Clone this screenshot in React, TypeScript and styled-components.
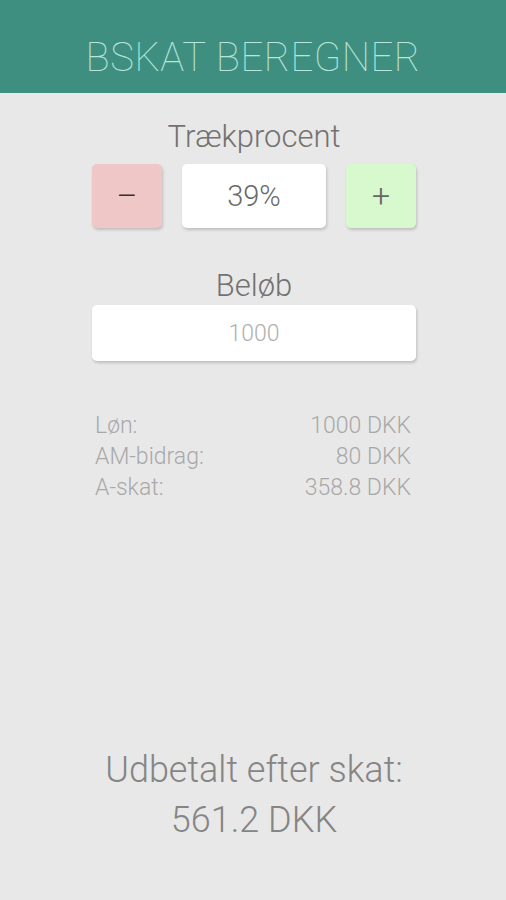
import React from "react";
import styled, { createGlobalStyle } from "styled-components";

const Global = createGlobalStyle`
  html, body {
    margin: 0;
    padding: 0;
    background: #e8e8e8;
    font-family: Roboto, "Liberation Sans", sans-serif;
  }
`;

const Page = styled.div`
  min-height: 900px;
  display: flex;
  flex-direction: column;
  background: #e8e8e8;
`;

const Header = styled.header`
  height: 93px;
  background: #3f8f81;
  display: flex;
  align-items: flex-end;
  justify-content: center;
  padding-bottom: 12px;
  box-sizing: border-box;
`;

const Title = styled.h1`
  margin: 0;
  font-size: 40px;
  font-weight: 100;
  color: #b8e6dc;
  letter-spacing: 0.5px;
`;

const Body = styled.main`
  flex: 1;
  display: flex;
  flex-direction: column;
  align-items: center;
  padding: 0 90px 0 92px;
`;

const Label = styled.div<{ $top: number }>`
  margin-top: ${(p) => p.$top}px;
  font-size: 31px;
  font-weight: 300;
  color: #727272;
  line-height: 34px;
`;

const Stepper = styled.div`
  width: 100%;
  margin-top: 10px;
  display: flex;
  justify-content: space-between;
  align-items: center;
`;

const Card = styled.div`
  background: #fff;
  border-radius: 5px;
  box-shadow: 1px 2px 3px rgba(0, 0, 0, 0.18);
  display: flex;
  align-items: center;
  justify-content: center;
  font-weight: 300;
`;

const StepButton = styled(Card)<{ $bg: string; $ink: string }>`
  width: 70px;
  height: 64px;
  background: ${(p) => p.$bg};
  font-size: 32px;
  color: ${(p) => p.$ink};
`;

const Value = styled(Card)`
  width: 144px;
  height: 64px;
  font-size: 29px;
  color: #6a6a6a;
`;

const Amount = styled(Card)`
  width: 100%;
  height: 56px;
  margin-top: 2px;
  font-size: 23px;
  color: #b0b0b0;
`;

const Table = styled.div`
  width: 100%;
  margin-top: 49px;
  padding: 0 5px 0 3px;
  box-sizing: border-box;
  display: grid;
  grid-template-columns: 1fr auto;
  font-size: 23px;
  font-weight: 300;
  line-height: 31px;
  color: #a8a8a8;
`;

const Cell = styled.span<{ $right?: boolean }>`
  text-align: ${(p) => (p.$right ? "right" : "left")};
`;

const Result = styled.div`
  margin-top: auto;
  margin-bottom: 55px;
  text-align: center;
  font-size: 36px;
  font-weight: 300;
  line-height: 50px;
  color: #858585;
`;

const rows = [
  ["Løn:", "1000 DKK"],
  ["AM-bidrag:", "80 DKK"],
  ["A-skat:", "358.8 DKK"],
];

export default function App() {
  return (
    <Page>
      <Global />
      <Header>
        <Title>BSKAT BEREGNER</Title>
      </Header>
      <Body>
        <Label $top={27}>Trækprocent</Label>
        <Stepper>
          <StepButton $bg="#efc7c7" $ink="#333">–</StepButton>
          <Value>39%</Value>
          <StepButton $bg="#d8f8cd" $ink="#666">+</StepButton>
        </Stepper>
        <Label $top={41}>Beløb</Label>
        <Amount>1000</Amount>
        <Table>
          {rows.map(([k, v]) => (
            <React.Fragment key={k}>
              <Cell>{k}</Cell>
              <Cell $right>{v}</Cell>
            </React.Fragment>
          ))}
        </Table>
        <Result>
          Udbetalt efter skat:
          <br />
          561.2 DKK
        </Result>
      </Body>
    </Page>
  );
}
